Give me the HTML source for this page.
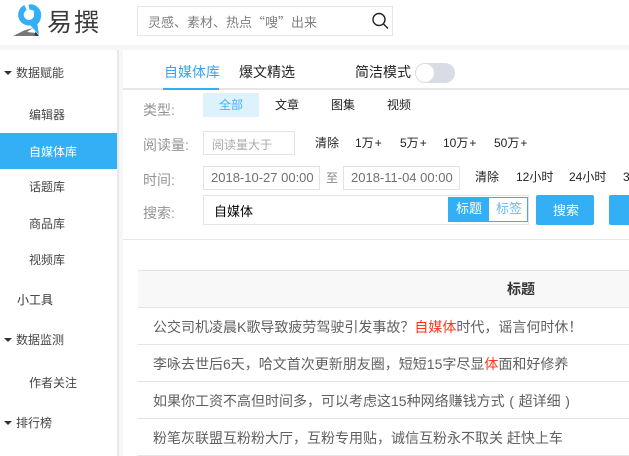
<!DOCTYPE html>
<html lang="zh"><head><meta charset="utf-8"><style>
html,body{margin:0;padding:0;background:#fff}
#p{position:relative;width:629px;height:456px;overflow:hidden;background:#fff;font-family:"Liberation Sans","Noto Sans CJK SC",sans-serif;font-size:12px;color:#333}
#p div{position:absolute;white-space:nowrap}
.t{line-height:20px;height:20px}
.lb{color:#949494;font-size:14px}
.sd{color:#444;font-size:12px}
.f{color:#222;font-size:12px}
.f i{font-style:normal;margin-left:1px}
.row{left:138px;width:491px;height:1px;background:#e4e4e4}
.tt{left:153px;color:#606060;font-size:14px;line-height:20px;height:20px}
.tt b{font-weight:normal;color:#f5371a}
.tt u{text-decoration:none;font-family:"Noto Sans CJK TC",sans-serif}
.tt s{text-decoration:none;display:inline-block;width:14px;text-align:center}
.q{font-family:"Noto Sans CJK SC",sans-serif}
.box{border:1px solid #e3e3e3;box-sizing:border-box}
</style></head><body><div id="p">
<div style="left:0;top:45px;width:629px;height:5px;background:#f6f6f6"></div>
<div style="left:117px;top:50px;width:2px;height:406px;background:#e8e8e8"></div>
<div style="left:119px;top:50px;width:4px;height:406px;background:#f7f7f7"></div>

<svg style="position:absolute;left:0;top:0" width="46" height="40" viewBox="0 0 46 40">
<path d="M25.5 7.5A8 8 0 1 0 36 11" fill="none" stroke="#33b0f5" stroke-width="5.5"/>
<path d="M29 7.2A8 8 0 0 1 38.2 17A8 8 0 0 1 35 22.5" fill="none" stroke="#33b0f5" stroke-width="5.5"/>
<path d="M30 25L37 22L39 35Z" fill="#33b0f5"/>
<path d="M13 36L24 30.5L33 28L27 32L36 33L38 36Z" fill="#777"/>
<path d="M35.5 31.5L39 36L34.5 36Z" fill="#2a3a4a"/>
</svg>
<div style="left:47px;top:5px;font-size:25px;line-height:36px;color:#3a3a3a;letter-spacing:2px">易撰</div>

<div class="box" style="left:137px;top:6px;width:256px;height:30px;border-color:#e6e6e6"></div>
<div class="t" style="left:148px;top:12px;font-size:13px;color:#808080">灵感、素材、热点<span class="q">“嗖”</span>出来</div>
<svg style="position:absolute;left:370px;top:11px" width="20" height="20" viewBox="0 0 20 20"><circle cx="9" cy="8.5" r="6" fill="none" stroke="#222" stroke-width="1.4"/><path d="M13.5 13L18 17.5" stroke="#222" stroke-width="1.4"/></svg>

<div style="left:4px;top:71px;width:0;height:0;border:4px solid transparent;border-top:4px solid #333;border-bottom:0"></div>
<div class="t sd" style="left:16px;top:63px">数据赋能</div>
<div class="t sd" style="left:29px;top:105px">编辑器</div>
<div style="left:0;top:133px;width:117px;height:36px;background:#33b0f5"></div>
<div class="t" style="left:29px;top:142px;color:#fff">自媒体库</div>
<div class="t sd" style="left:29px;top:177px">话题库</div>
<div class="t sd" style="left:29px;top:214px">商品库</div>
<div class="t sd" style="left:29px;top:250px">视频库</div>
<div class="t sd" style="left:17px;top:290px;color:#333">小工具</div>
<div style="left:4px;top:338px;width:0;height:0;border:4px solid transparent;border-top:4px solid #333;border-bottom:0"></div>
<div class="t sd" style="left:16px;top:330px">数据监测</div>
<div class="t sd" style="left:29px;top:373px">作者关注</div>
<div style="left:4px;top:421px;width:0;height:0;border:4px solid transparent;border-top:4px solid #333;border-bottom:0"></div>
<div class="t sd" style="left:16px;top:413px">排行榜</div>

<div style="left:123px;top:88px;width:506px;height:2px;background:#e6e6e6"></div>
<div style="left:163px;top:88px;width:56px;height:2px;background:#33b0f5"></div>
<div class="t" style="left:164px;top:62px;font-size:14px;color:#33a6f0">自媒体库</div>
<div class="t" style="left:239px;top:62px;font-size:14px;color:#222">爆文精选</div>
<div class="t" style="left:355px;top:62px;font-size:14px;color:#222">简洁模式</div>
<div style="left:415px;top:63px;width:40px;height:20px;border-radius:10px;background:#d9dce4"></div>
<div style="left:416px;top:64px;width:18px;height:18px;border-radius:9px;background:#fff"></div>

<div class="t lb" style="left:143px;top:100px">类型:</div>
<div style="left:203px;top:93px;width:56px;height:24px;background:#ddf2fd"></div>
<div class="t" style="left:219px;top:95px;color:#45b2f3">全部</div>
<div class="t f" style="left:275px;top:95px">文章</div>
<div class="t f" style="left:331px;top:95px">图集</div>
<div class="t f" style="left:387px;top:95px">视频</div>

<div class="t lb" style="left:143px;top:135px">阅读量:</div>
<div class="box" style="left:203px;top:131px;width:92px;height:24px"></div>
<div class="t" style="left:212px;top:135px;color:#aaa">阅读量大于</div>
<div class="t f" style="left:315px;top:133px">清除</div>
<div class="t f" style="left:355px;top:133px">1万<i>+</i></div>
<div class="t f" style="left:400px;top:133px">5万<i>+</i></div>
<div class="t f" style="left:443px;top:133px">10万<i>+</i></div>
<div class="t f" style="left:494px;top:133px">50万<i>+</i></div>

<div class="t lb" style="left:143px;top:170px">时间:</div>
<div class="box" style="left:203px;top:166px;width:117px;height:24px"></div>
<div class="t" style="left:211px;top:168px;font-size:13px;color:#707070">2018-10-27 00:00</div>
<div class="t" style="left:326px;top:168px;color:#888">至</div>
<div class="box" style="left:343px;top:166px;width:117px;height:24px"></div>
<div class="t" style="left:351px;top:168px;font-size:13px;color:#707070">2018-11-04 00:00</div>
<div class="t f" style="left:475px;top:167px">清除</div>
<div class="t f" style="left:516px;top:167px">12小时</div>
<div class="t f" style="left:569px;top:167px">24小时</div>
<div class="t f" style="left:623px;top:167px">3</div>

<div class="t lb" style="left:143px;top:203px">搜索:</div>
<div class="box" style="left:203px;top:195px;width:326px;height:30px"></div>
<div class="t" style="left:214px;top:202px;font-size:13px;color:#000">自媒体</div>
<div style="left:448px;top:197px;width:41px;height:25px;background:#33b0f5"></div>
<div class="box" style="left:488px;top:197px;width:40px;height:25px;border-color:#33b0f5;background:#fff"></div>
<div class="t" style="left:456px;top:199px;font-size:13px;color:#fff">标题</div>
<div class="t" style="left:496px;top:199px;font-size:13px;color:#66bbf0">标签</div>
<div style="left:536px;top:195px;width:58px;height:30px;background:#33b0f5;border-radius:2px"></div>
<div class="t" style="left:553px;top:201px;font-size:13px;color:#fff">搜索</div>
<div style="left:609px;top:195px;width:30px;height:30px;background:#33b0f5;border-radius:2px"></div>

<div style="left:123px;top:239px;width:506px;height:1px;background:#e6e6e6"></div>

<div style="left:138px;top:270px;width:491px;height:37px;background:#f8f8f8"></div>
<div class="row" style="top:270px"></div>
<div class="row" style="top:307px"></div>
<div class="row" style="top:344px"></div>
<div class="row" style="top:381px"></div>
<div class="row" style="top:418px"></div>
<div class="row" style="top:455px"></div>
<div class="t" style="left:507px;top:279px;font-size:14px;font-weight:bold;color:#333">标题</div>
<div class="tt" style="top:317px">公交司机凌晨K歌导致疲劳驾驶引发事故<u>？</u><b>自媒体</b>时代<u>，</u>谣言何时休<u>！</u></div>
<div class="tt" style="top:354px">李咏去世后6天<u>，</u>哈文首次更新朋友圈<u>，</u>短短15字尽显<b>体</b>面和好修养</div>
<div class="tt" style="top:391px">如果你工资不高但时间多<u>，</u>可以考虑这15种网络赚钱方式<s>(</s>超详细<s>)</s></div>
<div class="tt" style="top:428px">粉笔灰联盟互粉粉大厅<u>，</u>互粉专用贴<u>，</u>诚信互粉永不取关 赶快上车</div>
</div></body></html>
